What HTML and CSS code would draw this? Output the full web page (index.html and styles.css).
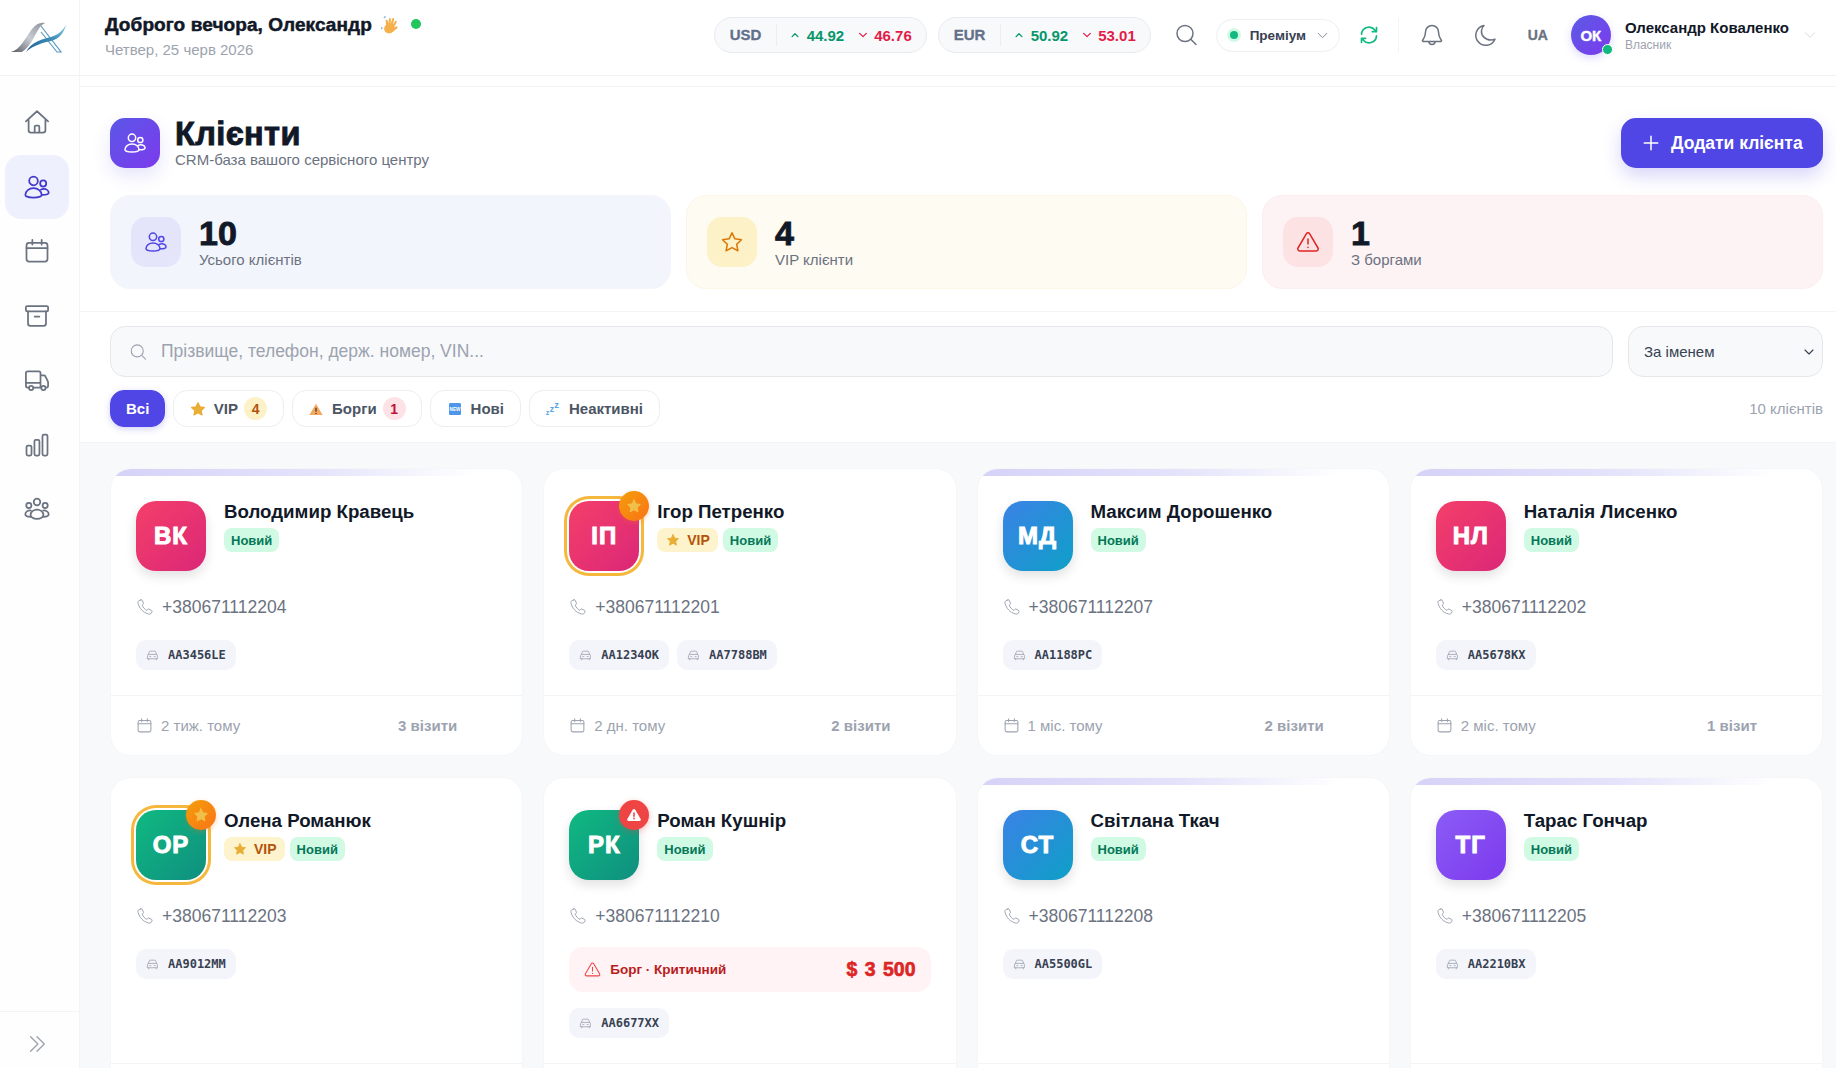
FILE: index.html
```html
<!DOCTYPE html>
<html lang="uk">
<head>
  <meta charset="UTF-8">
  <title>Клієнти</title>
  <link rel="stylesheet" href="styles.css">
</head>
<body>

  <svg class="sprite" width="0" height="0">
    <symbol id="i-home" viewBox="0 0 24 24"><path d="M2.5 11.5 12 2.8l9.5 8.7M4.8 9.6V19a2 2 0 0 0 2 2h10.4a2 2 0 0 0 2-2V9.6M10 21v-5a1 1 0 0 1 1-1h2a1 1 0 0 1 1 1v5"/></symbol>
    <symbol id="i-users" viewBox="0 0 24 24"><circle cx="9" cy="6.8" r="3.7"/><circle cx="17.3" cy="9" r="2.6"/><path d="M2 18.8c0-3.4 3.2-5.8 7-5.8s7 2.4 7 5.8c0 1.2-3.2 2.2-7 2.2s-7-1-7-2.2z"/><path d="M15.3 14.3c.7-.4 1.5-.6 2.4-.6 2.5 0 4.3 1.5 4.3 3.3 0 1.1-2.2 1.8-5.6 1.8"/></symbol>
    <symbol id="i-calendar" viewBox="0 0 24 24"><rect x="3" y="5" width="18" height="16" rx="2.2"/><path d="M3 9.5h18M8 2.5v4M16 2.5v4"/></symbol>
    <symbol id="i-box" viewBox="0 0 24 24"><rect x="2.5" y="3.5" width="19" height="4.5" rx="1"/><path d="M4.3 8v10.5a2 2 0 0 0 2 2h11.4a2 2 0 0 0 2-2V8M10 12.5h4"/></symbol>
    <symbol id="i-truck" viewBox="0 0 24 24"><path d="M5 18.5H4A1.500 1.500 0 0 1 2.500 17V6A1.500 1.500 0 0 1 4 4.500h9.500A1.500 1.500 0 0 1 15 6v12.500H9M2.500 14.500H15M15 8h2.800c.6 0 1.100.3 1.400.8l2 4.200c.2.400.3.800.3 1.200v2.800a1.500 1.500 0 0 1-1.500 1.500h-.5M15 18.500h.5"/><circle cx="7" cy="18.8" r="1.8"/><circle cx="17.5" cy="18.8" r="1.8"/></symbol>
    <symbol id="i-chart" viewBox="0 0 24 24"><rect x="3" y="12.5" width="4.3" height="8.5" rx="1.3"/><rect x="9.8" y="7.5" width="4.3" height="13.5" rx="1.3"/><rect x="16.7" y="3" width="4.3" height="18" rx="1.3"/></symbol>
    <symbol id="i-team" viewBox="0 0 24 24"><circle cx="12" cy="6" r="2.8"/><circle cx="5" cy="9" r="2.2"/><circle cx="19" cy="9" r="2.2"/><path d="M6.500 17c0-2.600 2.500-4.500 5.500-4.500s5.500 1.900 5.500 4.500c0 2-2.500 3.500-5.500 3.500s-5.500-1.500-5.500-3.500z"/><path d="M6.800 13.300C4.200 13 2 14.500 2 16.500c0 1.300 1.800 2.200 4.500 2.200M17.200 13.300c2.600-.3 4.800 1.200 4.800 3.200 0 1.300-1.800 2.200-4.500 2.200"/></symbol>
    <symbol id="i-double" viewBox="0 0 24 24"><path d="m5 4 8 8-8 8M12 4l8 8-8 8"/></symbol>
    <symbol id="i-search" viewBox="0 0 24 24"><circle cx="11" cy="10.5" r="8"/><path d="m17 16.500 5 5"/></symbol>
    <symbol id="i-chev" viewBox="0 0 24 24"><path d="m4 8 8 8 8-8"/></symbol>
    <symbol id="i-up" viewBox="0 0 24 24"><path d="m5 16 7-7 7 7"/></symbol>
    <symbol id="i-refresh" viewBox="0 0 24 24"><path d="M3 11a9 9 0 0 1 16-5l2 2M21 3v5h-5M21 13a9 9 0 0 1-16 5l-2-2M3 21v-5h5"/></symbol>
    <symbol id="i-bell" viewBox="0 0 24 24"><path d="M12 2.500a6.500 6.500 0 0 0-6.500 6.500c0 5.500-2.500 7.500-3 8.500-.2.500.1 1 .7 1h17.600c.6 0 .9-.5.7-1-.5-1-3-3-3-8.500A6.500 6.500 0 0 0 12 2.500zM9 18.500a3 3 0 0 0 6 0"/></symbol>
    <symbol id="i-moon" viewBox="0 0 24 24"><path d="M11 2.500a10 10 0 1 0 11 13.800 11 11 0 0 1-4 .7C12 17 8 12.500 8.500 7.500c.2-2 1.200-3.800 2.500-5z"/></symbol>
    <symbol id="i-plus" viewBox="0 0 24 24"><path d="M12 3v18M3 12h18"/></symbol>
    <symbol id="i-star" viewBox="0 0 24 24"><path d="m12 2.800 2.900 6 6.600.9-4.800 4.600 1.200 6.500-5.900-3.200-5.900 3.200 1.200-6.500-4.800-4.600 6.600-.9z"/></symbol>
    <symbol id="i-alert" viewBox="0 0 24 24"><path d="M10.300 3.800 2 18a2 2 0 0 0 1.700 3h16.600a2 2 0 0 0 1.700-3L13.700 3.800a2 2 0 0 0-3.400 0zM12 9v5M12 17.300v.2"/></symbol>
    <symbol id="i-phone" viewBox="0 0 24 24"><path d="M6.500 2.500 4 3.500c-1.200.6-1.700 2-1.300 3.500C4.500 14 9.500 19.500 16.500 21.300c1.600.4 3.400 0 4-1.200l.9-1.900c.3-.6 0-1.300-.5-1.600l-3.600-1.800c-.5-.3-1.200-.1-1.600.4l-1 1.300c-3-1.200-5.400-4-6.500-7l1.300-1c.5-.4.600-1 .4-1.600L8.300 3c-.3-.5-1.100-.8-1.800-.5z"/></symbol>
    <symbol id="i-car" viewBox="0 0 24 24"><path d="M4.500 10 6 5.500A2 2 0 0 1 8 4h8a2 2 0 0 1 2 1.500l1.500 4.500M3 12a2 2 0 0 1 2-2h14a2 2 0 0 1 2 2v6H3zM5 18v2M19 18v2M7 14h2M15 14h2"/></symbol>
  </svg>

  <header class="topbar">
    <div class="logo-cell">
      <svg class="logo" viewBox="0 0 56 34">
        <defs>
          <linearGradient id="silver" x1="0" y1="1" x2="1" y2="0"><stop offset="0" stop-color="#55595f"/><stop offset=".5" stop-color="#c9ccd2"/><stop offset="1" stop-color="#8d929a"/></linearGradient>
          <linearGradient id="wave" x1="0" y1="1" x2="1" y2="0"><stop offset="0" stop-color="#1d5f93"/><stop offset=".6" stop-color="#3f90bb"/><stop offset="1" stop-color="#8fd0e2"/></linearGradient>
        </defs>
        <path d="M0 31C9 29 15 16 21 8c4-5 8-7 13-6l-3 2c-6 5-10 21-20 27z" fill="url(#silver)"/>
        <path d="M30 5 50 31h-4L30 11" fill="none" stroke="#5a9cc0" stroke-width="1.2"/>
        <path d="M15 31c6-11 17-13 25-15 7-2 12-7 15-12-2 8-7 14-15 16-9 2-17 4-25 11z" fill="url(#wave)"/>
      </svg>
    </div>
    <div class="greeting">
      <div class="hello">
        <span>Доброго вечора, Олександр</span>
        <svg class="wave-hand" viewBox="0 0 24 24"><path d="M7 13 5 8.500c-.5-1.500 1.500-2.200 2.200-.8L9 11 8 5.500c-.3-1.600 1.800-2 2.200-.5l1.300 5 0-6c0-1.600 2.200-1.600 2.300 0l.5 6 1.200-4.200c.5-1.400 2.300-1 2 .5l-1 6.700 2-2c1.200-1 2.500.3 1.700 1.500l-3 5c-2 3.500-6 5-9 3-2-1.300-3-5-1-8z" fill="#f5b04c"/><path d="M2 6l1.500-2M3 17l1 2" stroke="#7fa6d8" stroke-width="1.5" fill="none"/></svg>
        <i class="online"></i>
      </div>
      <div class="date">Четвер, 25 черв 2026</div>
    </div>

    <div class="top-tools">
      <div class="rate">
        <b class="cur">USD</b>
        <svg class="ic tiny up"><use href="#i-up"/></svg><span class="buy">44.92</span>
        <svg class="ic tiny down"><use href="#i-chev"/></svg><span class="sell">46.76</span>
      </div>
      <div class="rate">
        <b class="cur">EUR</b>
        <svg class="ic tiny up"><use href="#i-up"/></svg><span class="buy">50.92</span>
        <svg class="ic tiny down"><use href="#i-chev"/></svg><span class="sell">53.01</span>
      </div>
      <svg class="ic tool tool-search"><use href="#i-search"/></svg>
      <div class="plan"><i class="plan-dot"></i><span>Преміум</span><svg class="ic plan-chev"><use href="#i-chev"/></svg></div>
      <svg class="ic refresh"><use href="#i-refresh"/></svg>
      <i class="tool-sep"></i>
      <svg class="ic tool tool-bell"><use href="#i-bell"/></svg>
      <svg class="ic tool tool-moon"><use href="#i-moon"/></svg>
      <b class="lang">UA</b>
      <div class="me-avatar">ОК<i></i></div>
      <div class="me">
        <b>Олександр Коваленко</b>
        <span>Власник</span>
      </div>
      <svg class="ic me-chev"><use href="#i-chev"/></svg>
    </div>
  </header>

  <div class="layout">
    <nav class="sidebar">
      <div class="nav-items">
        <a class="nav-item"><svg class="ic"><use href="#i-home"/></svg></a>
        <a class="nav-item active"><svg class="ic"><use href="#i-users"/></svg></a>
        <a class="nav-item"><svg class="ic"><use href="#i-calendar"/></svg></a>
        <a class="nav-item"><svg class="ic"><use href="#i-box"/></svg></a>
        <a class="nav-item"><svg class="ic"><use href="#i-truck"/></svg></a>
        <a class="nav-item"><svg class="ic"><use href="#i-chart"/></svg></a>
        <a class="nav-item"><svg class="ic"><use href="#i-team"/></svg></a>
      </div>
      <div class="nav-bottom"><svg class="ic"><use href="#i-double"/></svg></div>
    </nav>

    <main class="main">
      <div class="strip"></div>

      <section class="top-section">
        <div class="page-head">
          <div class="page-icon"><svg class="ic"><use href="#i-users"/></svg></div>
          <div class="page-title">
            <h1>Клієнти</h1>
            <p>CRM-база вашого сервісного центру</p>
          </div>
          <button class="add-btn"><svg class="ic"><use href="#i-plus"/></svg>Додати клієнта</button>
        </div>

        <div class="stats">
          <div class="stat stat-all">
            <div class="stat-icon"><svg class="ic"><use href="#i-users"/></svg></div>
            <div class="stat-text"><div class="stat-num">10</div><div class="stat-label">Усього клієнтів</div></div>
          </div>
          <div class="stat stat-vip">
            <div class="stat-icon"><svg class="ic"><use href="#i-star"/></svg></div>
            <div class="stat-text"><div class="stat-num">4</div><div class="stat-label">VIP клієнти</div></div>
          </div>
          <div class="stat stat-debt">
            <div class="stat-icon"><svg class="ic"><use href="#i-alert"/></svg></div>
            <div class="stat-text"><div class="stat-num">1</div><div class="stat-label">З боргами</div></div>
          </div>
        </div>
      </section>

      <section class="filter-section">
        <div class="search-row">
          <div class="search-box">
            <svg class="ic"><use href="#i-search"/></svg>
            <span>Прізвище, телефон, держ. номер, VIN...</span>
          </div>
          <div class="sort-box"><span>За іменем</span><svg class="ic"><use href="#i-chev"/></svg></div>
        </div>
        <div class="pills-row">
          <a class="pill active">Всі</a>
          <a class="pill"><svg class="emoji emoji-star"><use href="#i-star"/></svg>VIP<i class="count count-vip">4</i></a>
          <a class="pill">
            <svg class="emoji" viewBox="0 0 24 24"><path d="M12 4 2 21h20z" fill="#f4a862"/><path d="M12 10v6M12 18v1.500" stroke="#4b3a2a" stroke-width="2"/></svg>
            Борги<i class="count count-debt">1</i>
          </a>
          <a class="pill">
            <svg class="emoji" viewBox="0 0 24 24"><rect x="3" y="3" width="18" height="18" rx="2" fill="#4f96e8"/><text x="12" y="15" font-size="7" font-family="Liberation Sans" font-weight="700" fill="#fff" text-anchor="middle">NEW</text></svg>
            Нові
          </a>
          <a class="pill">
            <svg class="emoji" viewBox="0 0 24 24" fill="#5aa6e6" font-family="Liberation Sans" font-weight="700"><text x="1" y="21" font-size="11">z</text><text x="7" y="16" font-size="13">z</text><text x="14" y="11" font-size="14">z</text></svg>
            Неактивні
          </a>
          <span class="total">10 клієнтів</span>
        </div>
      </section>

      <section class="cards-section">
        <div class="cards">

          <article class="card striped">
            <div class="card-body">
              <div class="card-head">
                <div class="avatar pink">ВК</div>
                <div class="card-info">
                  <div class="name">Володимир Кравець</div>
                  <div class="tags"><span class="tag tag-new">Новий</span></div>
                </div>
              </div>
              <div class="phone"><svg class="ic"><use href="#i-phone"/></svg>+380671112204</div>
              <div class="plates"><span class="plate"><svg class="ic"><use href="#i-car"/></svg>AA3456LE</span></div>
            </div>
            <div class="card-foot"><span class="last"><svg class="ic"><use href="#i-calendar"/></svg>2 тиж. тому</span><b>3 візити</b></div>
          </article>

          <article class="card">
            <div class="card-body">
              <div class="card-head">
                <div class="avatar pink vip">ІП<i class="corner corner-vip"><svg class="ic"><use href="#i-star"/></svg></i></div>
                <div class="card-info">
                  <div class="name">Ігор Петренко</div>
                  <div class="tags"><span class="tag tag-vip"><svg class="ic"><use href="#i-star"/></svg>VIP</span><span class="tag tag-new">Новий</span></div>
                </div>
              </div>
              <div class="phone"><svg class="ic"><use href="#i-phone"/></svg>+380671112201</div>
              <div class="plates">
                <span class="plate"><svg class="ic"><use href="#i-car"/></svg>AA1234OK</span>
                <span class="plate"><svg class="ic"><use href="#i-car"/></svg>AA7788BM</span>
              </div>
            </div>
            <div class="card-foot"><span class="last"><svg class="ic"><use href="#i-calendar"/></svg>2 дн. тому</span><b>2 візити</b></div>
          </article>

          <article class="card striped">
            <div class="card-body">
              <div class="card-head">
                <div class="avatar blue">МД</div>
                <div class="card-info">
                  <div class="name">Максим Дорошенко</div>
                  <div class="tags"><span class="tag tag-new">Новий</span></div>
                </div>
              </div>
              <div class="phone"><svg class="ic"><use href="#i-phone"/></svg>+380671112207</div>
              <div class="plates"><span class="plate"><svg class="ic"><use href="#i-car"/></svg>AA1188PC</span></div>
            </div>
            <div class="card-foot"><span class="last"><svg class="ic"><use href="#i-calendar"/></svg>1 міс. тому</span><b>2 візити</b></div>
          </article>

          <article class="card striped">
            <div class="card-body">
              <div class="card-head">
                <div class="avatar pink">НЛ</div>
                <div class="card-info">
                  <div class="name">Наталія Лисенко</div>
                  <div class="tags"><span class="tag tag-new">Новий</span></div>
                </div>
              </div>
              <div class="phone"><svg class="ic"><use href="#i-phone"/></svg>+380671112202</div>
              <div class="plates"><span class="plate"><svg class="ic"><use href="#i-car"/></svg>AA5678KX</span></div>
            </div>
            <div class="card-foot"><span class="last"><svg class="ic"><use href="#i-calendar"/></svg>2 міс. тому</span><b>1 візит</b></div>
          </article>

          <article class="card">
            <div class="card-body">
              <div class="card-head">
                <div class="avatar green vip">ОР<i class="corner corner-vip"><svg class="ic"><use href="#i-star"/></svg></i></div>
                <div class="card-info">
                  <div class="name">Олена Романюк</div>
                  <div class="tags"><span class="tag tag-vip"><svg class="ic"><use href="#i-star"/></svg>VIP</span><span class="tag tag-new">Новий</span></div>
                </div>
              </div>
              <div class="phone"><svg class="ic"><use href="#i-phone"/></svg>+380671112203</div>
              <div class="plates"><span class="plate"><svg class="ic"><use href="#i-car"/></svg>AA9012MM</span></div>
            </div>
            <div class="card-foot"></div>
          </article>

          <article class="card">
            <div class="card-body">
              <div class="card-head">
                <div class="avatar green">РК<i class="corner corner-debt"><svg class="ic" viewBox="0 0 24 24"><path d="M10.300 3.800 2 18a2 2 0 0 0 1.700 3h16.600a2 2 0 0 0 1.700-3L13.700 3.800a2 2 0 0 0-3.400 0z" fill="#fff"/><path d="M12 9v5M12 17v.5" stroke="#ef4444" stroke-width="2.4"/></svg></i></div>
                <div class="card-info">
                  <div class="name">Роман Кушнір</div>
                  <div class="tags"><span class="tag tag-new">Новий</span></div>
                </div>
              </div>
              <div class="phone"><svg class="ic"><use href="#i-phone"/></svg>+380671112210</div>
              <div class="debt">
                <svg class="ic"><use href="#i-alert"/></svg>
                <span>Борг · Критичний</span>
                <b>$ 3 500</b>
              </div>
              <div class="plates"><span class="plate"><svg class="ic"><use href="#i-car"/></svg>AA6677XX</span></div>
            </div>
            <div class="card-foot"></div>
          </article>

          <article class="card striped">
            <div class="card-body">
              <div class="card-head">
                <div class="avatar blue">СТ</div>
                <div class="card-info">
                  <div class="name">Світлана Ткач</div>
                  <div class="tags"><span class="tag tag-new">Новий</span></div>
                </div>
              </div>
              <div class="phone"><svg class="ic"><use href="#i-phone"/></svg>+380671112208</div>
              <div class="plates"><span class="plate"><svg class="ic"><use href="#i-car"/></svg>AA5500GL</span></div>
            </div>
            <div class="card-foot"></div>
          </article>

          <article class="card striped">
            <div class="card-body">
              <div class="card-head">
                <div class="avatar purple">ТГ</div>
                <div class="card-info">
                  <div class="name">Тарас Гончар</div>
                  <div class="tags"><span class="tag tag-new">Новий</span></div>
                </div>
              </div>
              <div class="phone"><svg class="ic"><use href="#i-phone"/></svg>+380671112205</div>
              <div class="plates"><span class="plate"><svg class="ic"><use href="#i-car"/></svg>AA2210BX</span></div>
            </div>
            <div class="card-foot"></div>
          </article>

        </div>
      </section>
    </main>
  </div>

</body>
</html>
```

FILE: styles.css
```css
* {
  box-sizing: border-box;
}

html, body {
  height: 100%;
}

body {
  margin: 0;
  height: 1068px;
  overflow: hidden;
  font-family: "Liberation Sans", Arial, sans-serif;
  color: #111827;
  background: #fff;
}

.sprite {
  position: absolute;
}

.ic {
  display: block;
  flex: none;
  fill: none;
  stroke: currentColor;
  stroke-width: 1.5;
  stroke-linecap: round;
  stroke-linejoin: round;
}

/* top bar */
.topbar {
  display: flex;
  align-items: center;
  height: 76px;
  border-bottom: 1px solid #f1f2f5;
  background: #fff;
}

.logo-cell {
  display: flex;
  align-items: center;
  justify-content: center;
  width: 80px;
  height: 75px;
  padding-right: 1px;
  border-right: 1px solid #f3f4f6;
}

.logo {
  width: 56px;
  height: 34px;
  margin-top: 1px;
}

.greeting {
  margin-left: 25px;
  padding-bottom: 3px;
}

.hello {
  display: flex;
  align-items: center;
  font-size: 19px;
  font-weight: 700;
  letter-spacing: .1px;
  -webkit-text-stroke: .5px #111827;
}

.wave-hand {
  width: 21px;
  height: 21px;
  margin-left: 8px;
  transform: rotate(18deg);
}

.online {
  width: 10px;
  height: 10px;
  margin-left: 10px;
  margin-top: -3px;
  border-radius: 50%;
  background: #22c55e;
}

.date {
  margin-top: 5px;
  font-size: 15px;
  color: #9ca3af;
}

.top-tools {
  display: flex;
  align-items: center;
  margin-left: auto;
  padding: 0 19px 5px 0;
}

.rate {
  display: flex;
  align-items: center;
  width: 213px;
  height: 36px;
  margin-right: 11px;
  padding-left: 15px;
  border: 1px solid #e8eaef;
  border-radius: 18px;
  background: #f8f9fb;
  font-size: 15px;
  font-weight: 700;
}

.cur {
  width: 47px;
  height: 22px;
  margin-right: 13px;
  border-right: 1px solid #eceef2;
  color: #64708a;
  line-height: 22px;
  -webkit-text-stroke: .3px #64708a;
}

.tiny {
  width: 10px;
  height: 10px;
  stroke-width: 3;
}

.tiny.up {
  margin-right: 7px;
  color: #059669;
}

.tiny.down {
  margin-left: 14px;
  margin-right: 6px;
  color: #e11d48;
}

.buy {
  color: #059669;
}

.sell {
  color: #e11d48;
}

.tool {
  width: 24px;
  height: 24px;
  color: #6b7280;
}

.tool-search {
  margin-left: 12px;
}

.plan {
  display: flex;
  align-items: center;
  width: 124px;
  height: 33px;
  margin-left: 18px;
  padding-left: 13px;
  border: 1px solid #eceef2;
  border-radius: 17px;
  font-size: 13.5px;
  font-weight: 700;
  color: #374151;
}

.plan-dot {
  width: 8px;
  height: 8px;
  margin-right: 12px;
  border-radius: 50%;
  background: #10b981;
  box-shadow: 0 0 0 3px #d1fae5;
}

.plan-chev {
  width: 13px;
  height: 13px;
  margin-left: 10px;
  color: #6b7280;
}

.refresh {
  width: 20px;
  height: 20px;
  margin-left: 19px;
  color: #10b981;
  stroke-width: 2;
}

.tool-sep {
  width: 1px;
  height: 34px;
  margin-left: 19px;
  background: #f3f4f6;
}

.tool-bell {
  margin-left: 21px;
}

.tool-moon {
  margin-left: 29px;
}

.lang {
  margin-left: 31px;
  font-size: 14px;
  color: #6b7280;
  -webkit-text-stroke: .3px #6b7280;
}

.me-avatar {
  position: relative;
  display: flex;
  align-items: center;
  justify-content: center;
  width: 40px;
  height: 40px;
  margin-left: 23px;
  border-radius: 50%;
  background: linear-gradient(135deg, #5b5be6, #7c3aed);
  box-shadow: 0 3px 8px rgba(79, 70, 229, .2);
  color: #fff;
  font-size: 15px;
  font-weight: 700;
  -webkit-text-stroke: .4px #fff;
}

.me-avatar i {
  position: absolute;
  right: -2px;
  bottom: 0;
  width: 11px;
  height: 11px;
  border: 1px solid #fff;
  border-radius: 50%;
  background: #10b981;
}

.me {
  display: flex;
  flex-direction: column;
  margin-left: 14px;
}

.me b {
  font-size: 15px;
  line-height: 18px;
}

.me span {
  margin-top: 1px;
  font-size: 12px;
  color: #9ca3af;
}

.me-chev {
  width: 14px;
  height: 14px;
  margin-left: 14px;
  color: #d1d5db;
}

/* sidebar + main */
.layout {
  display: flex;
  height: 992px;
}

.sidebar {
  display: flex;
  flex-direction: column;
  flex: none;
  width: 80px;
  border-right: 1px solid #f3f4f6;
  background: #fefefe;
}

.nav-items {
  display: flex;
  flex-direction: column;
  padding: 14px 0 0 5px;
}

.nav-item {
  display: flex;
  align-items: center;
  justify-content: center;
  width: 64px;
  height: 64.5px;
  border-radius: 16px;
  color: #6b7280;
}

.nav-item .ic {
  width: 28px;
  height: 28px;
}

.nav-item.active {
  background: #eef0fd;
  color: #4338ca;
}

.nav-bottom {
  display: flex;
  justify-content: center;
  align-items: center;
  height: 57px;
  margin-top: auto;
  padding: 7px 6px 0 0;
  border-top: 1px solid #f3f4f6;
  color: #9ca3af;
}

.nav-bottom .ic {
  width: 22px;
  height: 22px;
}

.main {
  flex: 1;
  min-width: 0;
  overflow: hidden;
}

.strip {
  height: 11px;
  border-bottom: 1px solid #f3f4f6;
}

.top-section {
  padding: 31px 13px 22px 30px;
  border-bottom: 1px solid #f3f4f6;
}

.page-head {
  display: flex;
  align-items: center;
  height: 50px;
}

.page-icon {
  display: flex;
  align-items: center;
  justify-content: center;
  width: 50px;
  height: 50px;
  margin-right: 15px;
  border-radius: 15px;
  background: linear-gradient(135deg, #5b57e6, #7c3aed);
  box-shadow: 0 8px 18px rgba(79, 70, 229, .14);
  color: #fff;
}

.page-icon .ic {
  width: 24px;
  height: 24px;
}

.page-title h1 {
  margin: -1px 0 0;
  font-size: 32.5px;
  line-height: 34px;
  font-weight: 700;
  letter-spacing: .4px;
  -webkit-text-stroke: .9px #111827;
}

.page-title p {
  margin: 0;
  font-size: 15px;
  line-height: 17px;
  color: #6b7280;
}

.add-btn {
  display: flex;
  align-items: center;
  height: 50px;
  width: 202px;
  margin-left: auto;
  padding: 0 0 0 21px;
  border: 0;
  border-radius: 15px;
  background: #4f46e5;
  box-shadow: 0 8px 18px rgba(79, 70, 229, .22);
  color: #fff;
  font-family: inherit;
  font-size: 17.5px;
  font-weight: 700;
}

.add-btn .ic {
  width: 18px;
  height: 18px;
  margin-right: 11px;
  stroke-width: 2;
}

.stats {
  display: grid;
  grid-template-columns: repeat(3, 1fr);
  gap: 15px;
  margin-top: 27px;
}

.stat {
  display: flex;
  align-items: center;
  height: 94px;
  padding-left: 20px;
  border: 1px solid transparent;
  border-radius: 20px;
}

.stat-icon {
  display: flex;
  align-items: center;
  justify-content: center;
  width: 50px;
  height: 50px;
  margin-right: 18px;
  border-radius: 15px;
}

.stat-icon .ic {
  width: 24px;
  height: 24px;
}

.stat-text {
  margin-top: -2px;
}

.stat-num {
  font-size: 34px;
  line-height: 36px;
  font-weight: 700;
  -webkit-text-stroke: .9px #111827;
}

.stat-label {
  font-size: 15px;
  line-height: 17px;
  color: #6b7280;
}

.stat-all {
  background: #f3f5fc;
  border-color: #f4f5fb;
}

.stat-all .stat-icon {
  background: #e4e5fb;
  color: #4f46e5;
}

.stat-vip {
  background: #fefbf3;
  border-color: #fcf6e6;
}

.stat-vip .stat-icon {
  background: #fdf1c7;
  color: #d97706;
}

.stat-debt {
  background: #fef3f4;
  border-color: #fdeef0;
}

.stat-debt .stat-icon {
  background: #fde2e4;
  color: #dc2626;
}

/* search and filters */
.filter-section {
  padding: 14px 13px 15px 30px;
  border-bottom: 1px solid #f3f4f6;
}

.search-row {
  display: flex;
  gap: 15px;
}

.search-box {
  display: flex;
  flex: 1;
  align-items: center;
  height: 51px;
  padding-left: 18px;
  border: 1px solid #e5e7eb;
  border-radius: 15px;
  background: #f8f9fb;
  font-size: 17.5px;
  color: #9ca3af;
}

.search-box .ic {
  width: 18px;
  height: 18px;
  margin-right: 14px;
}

.sort-box {
  display: flex;
  align-items: center;
  justify-content: space-between;
  width: 195px;
  height: 51px;
  padding: 0 7px 0 15px;
  border: 1px solid #e5e7eb;
  border-radius: 15px;
  background: #f8f9fb;
  font-size: 15px;
  color: #374151;
}

.sort-box .ic {
  width: 12px;
  height: 12px;
  stroke-width: 2.2;
}

.pills-row {
  display: flex;
  align-items: center;
  gap: 8px;
  margin-top: 13px;
}

.pill {
  display: flex;
  align-items: center;
  height: 37px;
  padding: 0 15.5px;
  border: 1px solid #eceef2;
  border-radius: 14px;
  font-size: 15px;
  font-weight: 700;
  color: #4b5563;
}

.pill.active {
  padding: 0 15px;
  border-color: #4f46e5;
  background: #4f46e5;
  box-shadow: 0 2px 6px rgba(79, 70, 229, .25);
  color: #fff;
}

.emoji {
  flex: none;
  width: 16px;
  height: 16px;
  margin-right: 8px;
}

.emoji-star {
  fill: #e9ae35;
  stroke: #e9ae35;
  stroke-width: 2;
  stroke-linejoin: round;
}

.count {
  display: flex;
  align-items: center;
  justify-content: center;
  width: 23px;
  height: 23px;
  margin-left: 6px;
  border-radius: 50%;
  font-size: 14px;
  font-style: normal;
}

.count-vip {
  background: #fdf1c7;
  color: #b45309;
}

.count-debt {
  background: #fde2e6;
  color: #be123c;
}

.total {
  margin-left: auto;
  font-size: 15px;
  color: #9ca3af;
}

/* client cards */
.cards-section {
  height: 700px;
  padding: 26px 14px 0 31px;
  background: #f8f9fb;
}

.cards {
  display: grid;
  grid-template-columns: repeat(4, 1fr);
  gap: 23px 22px;
}

.card {
  position: relative;
  display: flex;
  flex-direction: column;
  overflow: hidden;
  border-radius: 20px;
  background: #fff;
  box-shadow: 0 0 0 1px #f5f6f8;
}

.card.striped::before {
  content: "";
  position: absolute;
  top: 0;
  left: 0;
  right: 0;
  height: 7px;
  background: linear-gradient(90deg, #d5d2f8, #e4e3fb 50%, #fff 88%);
}

.card-body {
  flex: 1;
  padding: 32px 25px 25px;
}

.card-head {
  display: flex;
  height: 70px;
}

.avatar {
  position: relative;
  display: flex;
  flex: none;
  align-items: center;
  justify-content: center;
  width: 70px;
  height: 70px;
  margin-right: 18px;
  border-radius: 20px;
  box-shadow: 0 5px 12px rgba(0, 0, 0, .12);
  color: #fff;
  font-size: 24px;
  font-weight: 700;
  letter-spacing: 1px;
  -webkit-text-stroke: 1px #fff;
}

.avatar.vip {
  box-shadow: 0 0 0 2px #fff, 0 0 0 5px #f5b83d;
}

.pink {
  background: linear-gradient(135deg, #f43f6a, #db2777);
}

.blue {
  background: linear-gradient(135deg, #3b82e6, #0e9fc7);
}

.green {
  background: linear-gradient(135deg, #10b981, #0f8f80);
}

.purple {
  background: linear-gradient(135deg, #8b5cf6, #7c3aed);
}

.corner {
  position: absolute;
  top: -10px;
  right: -10px;
  display: flex;
  align-items: center;
  justify-content: center;
  width: 30px;
  height: 30px;
  border-radius: 50%;
  -webkit-text-stroke: 0;
}

.corner .ic {
  width: 16px;
  height: 16px;
}

.corner-vip {
  background: linear-gradient(135deg, #f59e0b, #f97316);
  box-shadow: 0 2px 5px rgba(249, 115, 22, .3);
  color: #f0c04a;
}

.corner-vip .ic {
  fill: #f0c04a;
}

.corner-debt {
  background: #ef4444;
  box-shadow: 0 2px 6px rgba(239, 68, 68, .35);
}

.corner-debt .ic {
  stroke: none;
}

.card-info {
  margin-top: -1px;
}

.name {
  font-size: 18.7px;
  line-height: 24px;
  font-weight: 700;
}

.tags {
  display: flex;
  gap: 5px;
  margin-top: 4px;
}

.tag {
  display: flex;
  align-items: center;
  height: 24px;
  padding: 0 7px;
  border-radius: 8px;
  font-size: 13px;
  font-weight: 700;
}

.tag-new {
  background: #d1fae5;
  color: #047857;
}

.tag-vip {
  padding: 0 8px 0 9px;
  background: #fdf3cd;
  color: #b45309;
  font-size: 14px;
}

.tag-vip .ic {
  width: 14px;
  height: 14px;
  margin-right: 7px;
  fill: #e9ae35;
  stroke: #e9ae35;
}

.phone {
  display: flex;
  align-items: center;
  height: 24px;
  margin-top: 24px;
  font-size: 17.5px;
  color: #6b7280;
}

.phone .ic {
  width: 18px;
  height: 18px;
  margin-right: 8px;
  color: #9ca3af;
  stroke-width: 1.3;
}

.plates {
  display: flex;
  gap: 8px;
  margin-top: 21px;
}

.plate {
  display: flex;
  align-items: center;
  height: 30px;
  padding: 0 10px;
  border-radius: 10px;
  background: #f4f5fb;
  font-family: "DejaVu Sans Mono", "Liberation Mono", monospace;
  font-size: 12px;
  font-weight: 700;
  color: #374151;
}

.plate .ic {
  width: 13px;
  height: 13px;
  margin-right: 9px;
  color: #9ca3af;
}

.debt {
  display: flex;
  align-items: center;
  height: 45px;
  margin-top: 19px;
  margin-bottom: -5px;
  padding: 0 15px;
  border-radius: 14px;
  background: #fff3f5;
  font-size: 13.5px;
  font-weight: 700;
  color: #b91c1c;
}

.debt .ic {
  width: 17px;
  height: 17px;
  margin-right: 9px;
  color: #ef4444;
}

.debt b {
  margin-left: auto;
  font-size: 19.5px;
  word-spacing: 2px;
  color: #dc2626;
  -webkit-text-stroke: .6px #dc2626;
}

.card-foot {
  display: flex;
  align-items: center;
  justify-content: space-between;
  flex: none;
  height: 60px;
  padding: 0 65px 0 25px;
  border-top: 1px solid #f3f4f6;
  font-size: 15px;
  color: #9ca3af;
}

.last {
  display: flex;
  align-items: center;
}

.last .ic {
  width: 17px;
  height: 17px;
  margin-right: 8px;
}
```
